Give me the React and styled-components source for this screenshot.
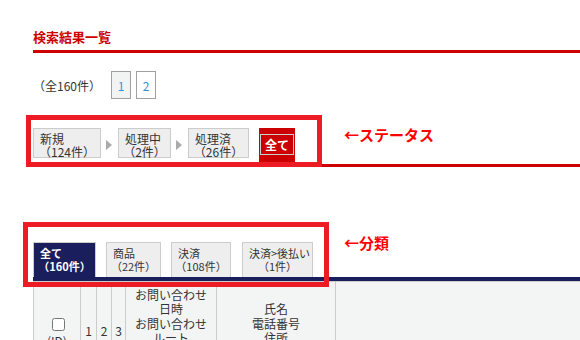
import { Fragment } from "react";
import styled, { createGlobalStyle } from "styled-components";

const GlobalStyle = createGlobalStyle`
  html, body {
    margin: 0;
    padding: 0;
    background: #fff;
    overflow: hidden;
  }
  body {
    font-family: "Noto Sans CJK JP", "Noto Sans", sans-serif;
    color: #333;
  }
`;

const Page = styled.div`
  padding-left: 33px;
`;

const Title = styled.h2`
  margin: 0;
  padding: 27px 0 3px;
  font-size: 13px;
  line-height: 20px;
  font-weight: bold;
  color: #cc0000;
  border-bottom: 3px solid #cc0000;
`;

const Pager = styled.div`
  display: flex;
  align-items: center;
  margin-top: 18px;
  height: 28px;
  font-size: 12px;
`;

const Total = styled.span`
  margin-right: 10px;
`;

const PageButton = styled.a`
  box-sizing: border-box;
  width: 20px;
  height: 28px;
  margin-right: 5px;
  display: flex;
  align-items: center;
  justify-content: center;
  border: 1px solid #a0a0a0;
  background: ${(p) => (p.$current ? "#f2f4f4" : "#fff")};
  color: #3b8fd4;
`;

const StatusBar = styled.div`
  position: relative;
  display: flex;
  align-items: flex-start;
  margin-top: 29px;
  border-bottom: 3px solid #cc0000;
`;

const StatusTab = styled.div`
  box-sizing: border-box;
  width: ${(p) => p.$w}px;
  height: 30px;
  padding: 3px 6px 0;
  background: #eee;
  border: 1px solid #ccc;
  font-size: 12px;
  line-height: 13px;
  color: #333;
  white-space: nowrap;
`;

const Label = styled.span`
  display: block;
  text-align: left;
`;

const Count = styled.span`
  display: block;
  margin: 0 -6px;
  text-align: center;
`;

const Arrow = styled.span`
  width: 0;
  height: 0;
  margin: 12px 6px 0 5px;
  border-left: 6px solid #aaa;
  border-top: 5.5px solid transparent;
  border-bottom: 5.5px solid transparent;
`;

const StatusActive = styled.div`
  box-sizing: border-box;
  height: 36px;
  margin-left: 10px;
  padding: 6px 1px 0;
  background: #cc0000;
`;

const StatusActiveInner = styled.span`
  display: block;
  box-sizing: border-box;
  height: 21px;
  padding: 0 4px;
  border: 1px solid #ccc;
  font-size: 12px;
  line-height: 19px;
  font-weight: bold;
  color: #fff;
`;

const Frame = styled.div`
  position: absolute;
  left: ${(p) => p.$left}px;
  top: ${(p) => p.$top}px;
  width: ${(p) => p.$width}px;
  height: ${(p) => p.$height}px;
  box-sizing: border-box;
  border: 5px solid #ed1c24;
  pointer-events: none;
`;

const Note = styled.span`
  margin-left: ${(p) => p.$gap}px;
  margin-top: ${(p) => p.$shift}px;
  font-size: 15px;
  line-height: 14px;
  font-weight: bold;
  color: #ff0000;
  white-space: nowrap;
`;

const CategoryBar = styled.div`
  position: relative;
  display: flex;
  align-items: flex-start;
  margin-top: 75px;
  border-bottom: 4px solid #1b1e5c;
`;

const CategoryTab = styled.div`
  box-sizing: border-box;
  width: ${(p) => p.$w}px;
  height: 35px;
  margin-right: ${(p) => p.$gap}px;
  padding: 4px 6px 0;
  border: 1px solid #ccc;
  border-bottom: none;
  background: ${(p) => (p.$active ? "#1b1e5c" : "#eee")};
  color: ${(p) => (p.$active ? "#fff" : "#333")};
  font-weight: ${(p) => (p.$active ? "bold" : "normal")};
  font-size: 11px;
  line-height: 13px;
  white-space: nowrap;
`;

const TableWrap = styled.div`
  overflow: hidden;
`;

const Table = styled.table`
  border-collapse: collapse;
  table-layout: fixed;
  width: 640px;
  font-size: 12px;
  line-height: 14.4px;
  color: #333;
`;

const Th = styled.th`
  width: ${(p) => p.$w}px;
  padding: 6px 0;
  background: #f3f5f5;
  border: 1px solid #ccc;
  font-weight: normal;
  text-align: center;
  vertical-align: middle;
  overflow: hidden;
`;

const Check = styled.input`
  width: 13px;
  height: 13px;
  margin: 3px 0 3px 3px;
`;

const statuses = [
  { label: "新規", count: "（124件）", w: 68 },
  { label: "処理中", count: "（2件）", w: 53 },
  { label: "処理済", count: "（26件）", w: 61 },
];

const categories = [
  { label: "全て", count: "（160件）", active: true, w: 63, gap: 10 },
  { label: "商品", count: "（22件）", w: 55, gap: 10 },
  { label: "決済", count: "（108件）", w: 60, gap: 11 },
  { label: "決済>後払い", count: "（1件）", w: 71, gap: 0 },
];

export default function App() {
  return (
    <>
      <GlobalStyle />
      <Page>
        <Title>検索結果一覧</Title>

        <Pager>
          <Total>（全160件）</Total>
          <PageButton $current>1</PageButton>
          <PageButton>2</PageButton>
        </Pager>

        <StatusBar>
          {statuses.map((s, i) => (
            <Fragment key={s.label}>
              {i > 0 && <Arrow />}
              <StatusTab $w={s.w}>
                <Label>{s.label}</Label>
                <Count>{s.count}</Count>
              </StatusTab>
            </Fragment>
          ))}
          <StatusActive>
            <StatusActiveInner>全て</StatusActiveInner>
          </StatusActive>
          <Note $gap={49} $shift={0}>←ステータス</Note>
          <Frame $left={-7} $top={-13} $width={296} $height={52} />
        </StatusBar>

        <CategoryBar>
          {categories.map((c) => (
            <CategoryTab key={c.label} $active={c.active} $w={c.w} $gap={c.gap}>
              <Label>{c.label}</Label>
              <Count>{c.count}</Count>
            </CategoryTab>
          ))}
          <Note $gap={31} $shift={-6}>←分類</Note>
          <Frame $left={-10} $top={-20} $width={306} $height={65} />
        </CategoryBar>

        <TableWrap>
          <Table>
            <thead>
              <tr>
                <Th $w={46}>
                  <Check type="checkbox" />
                  <br />
                  (ID)
                </Th>
                <Th $w={15}>1</Th>
                <Th $w={14}>2</Th>
                <Th $w={13}>3</Th>
                <Th $w={90}>
                  お問い合わせ
                  <br />
                  日時
                  <br />
                  お問い合わせ
                  <br />
                  ルート
                  <br />
                  対応状況
                  <br />
                  担当者
                </Th>
                <Th $w={118}>
                  氏名
                  <br />
                  電話番号
                  <br />
                  住所
                  <br />
                  メール
                </Th>
                <Th />
              </tr>
            </thead>
          </Table>
        </TableWrap>
      </Page>
    </>
  );
}
